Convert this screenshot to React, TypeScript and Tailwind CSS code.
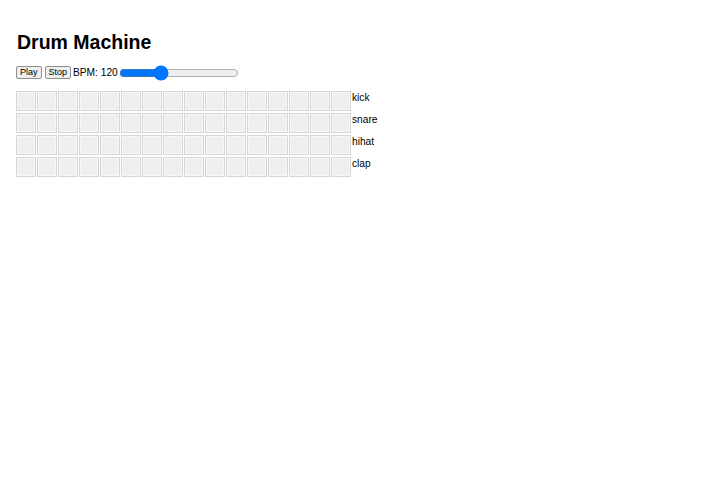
import { useState } from 'react'

const tracks = ['kick', 'snare', 'hihat', 'clap']
const STEPS = 16

export default function App() {
  const [bpm, setBpm] = useState(120)
  const [grid, setGrid] = useState<boolean[][]>(() =>
    tracks.map(() => Array(STEPS).fill(false))
  )

  const toggle = (r: number, c: number) =>
    setGrid((g) => g.map((row, i) => (i === r ? row.map((v, j) => (j === c ? !v : v)) : row)))

  return (
    <div className="min-h-screen bg-white px-4 pt-[30px] text-black" style={{ fontFamily: '"Liberation Sans", Arial, sans-serif' }}>
      <h1 className="ml-px text-[19.5px] font-bold leading-[24px]">Drum Machine</h1>

      <div className="mt-[12px] flex items-center">
        <button className="h-[13px] rounded-[2px] border border-[#8f8f8f] bg-[#efefef] px-[3px] text-[9px] leading-[11px]">
          Play
        </button>
        <button className="ml-[3px] h-[13px] rounded-[2px] border border-[#8f8f8f] bg-[#efefef] px-[3px] text-[9px] leading-[11px]">
          Stop
        </button>
        <span className="ml-[2px] text-[10.2px] leading-[13px]">BPM: 120</span>
        <input
          type="range"
          min={60}
          max={240}
          value={bpm}
          onChange={(e) => setBpm(Number(e.target.value))}
          className="ml-[1px] h-[12px] w-[120px] accent-[#0075ff]"
        />
      </div>

      <div className="mt-[12px] flex flex-col gap-[2px]">
        {tracks.map((t, r) => (
          <div key={t} className="flex items-start">
            <div className="flex gap-px">
              {grid[r].map((on, c) => (
                <button
                  key={c}
                  onClick={() => toggle(r, c)}
                  className={`h-5 w-5 border border-[#d6d6d6] shadow-[inset_0_0_0_1px_#f7f7f7] ${on ? 'bg-[#ff6b6b]' : 'bg-[#efefef]'}`}
                />
              ))}
            </div>
            <span className="ml-px text-[10.2px] leading-[13px]">{t}</span>
          </div>
        ))}
      </div>
    </div>
  )
}
